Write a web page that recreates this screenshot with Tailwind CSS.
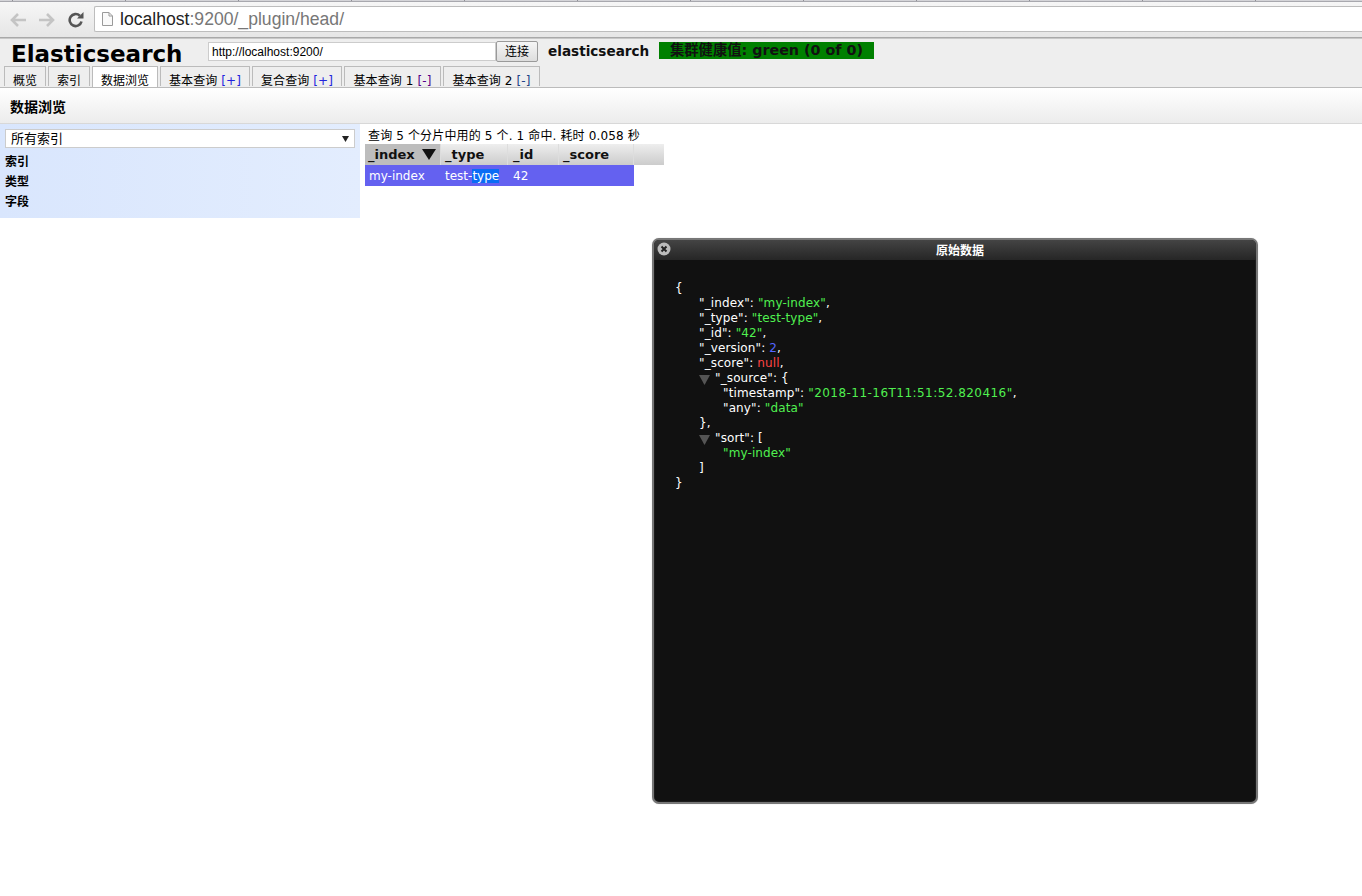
<!DOCTYPE html>
<html lang="en">
<head>
  <meta charset="UTF-8" />
  <title>Elasticsearch head</title>
  <script src="https://cdn.jsdelivr.net/npm/@tailwindcss/browser@4"></script>
</head>
<body class="relative h-[896px] overflow-hidden bg-white text-black text-[12px] font-['DejaVu_Sans','Noto_Sans_CJK_SC',sans-serif]">

  <!-- browser toolbar -->
  <div class="h-[38px] flex flex-col border-b border-[#a9a9a9] bg-gradient-to-b from-[#f7f7f7] to-[#e6e6e6]">
    <div class="h-[2px] bg-[repeating-linear-gradient(90deg,#d4d4d8_0,#d4d4d8_12px,#8f8f96_12px,#8f8f96_13px,#d4d4d8_13px,#d4d4d8_113px)] border-b border-[#a8a8ae]"></div>
    <div class="flex items-center flex-1 pl-[9px]">
      <svg class="w-[18px] h-[16px] mr-[11px]" viewBox="0 0 18 16" fill="none" stroke="#c4c4c4" stroke-width="2.6"><path d="M17 8H3M9 2 3 8l6 6"/></svg>
      <svg class="w-[18px] h-[16px] mr-[12px]" viewBox="0 0 18 16" fill="none" stroke="#c4c4c4" stroke-width="2.6"><path d="M1 8h14M9 2l6 6-6 6"/></svg>
      <svg class="w-[16px] h-[16px] mr-[10px]" viewBox="0 0 16 16" fill="none"><path d="M13.5 9.5A6 6 0 1 1 11.8 3.7" stroke="#555" stroke-width="2.6"/><path d="M9 6.5h6.5V0z" fill="#555"/></svg>
      <div class="flex items-center flex-1 h-[26px] mt-[-1px] pl-[7px] bg-white border border-[#bdbdbd] border-r-0 rounded-l-[2px] text-[17.6px] font-['Liberation_Sans',sans-serif]">
        <svg class="w-[11px] h-[14px] mr-[7px]" viewBox="0 0 11 14" fill="#fafafa" stroke="#9a9a9a"><path d="M.5.5h6.5l3.5 3.5v9.5h-10zM7 .5V4h3.5"/></svg>
        <span class="text-[#222]">localhost</span><span class="text-[#777]">:9200/_plugin/head/</span>
      </div>
    </div>
  </div>

  <!-- app header -->
  <div class="h-[50px] bg-[#eeeeee] border-t border-[#c8c8c8] border-b border-b-[#bbbbbb]">
    <div class="flex h-[28px] pt-[2px]">
      <h1 class="w-[208px] pl-[11px] text-[23px] leading-[26px] font-bold">Elasticsearch</h1>
      <input class="w-[288px] h-[19px] mt-[1px] px-[3px] bg-white border border-[#cccccc] text-[12px] font-['Liberation_Sans',sans-serif] outline-none" value="http://localhost:9200/" />
      <button class="w-[42px] h-[21px] border border-[#9a9a9a] rounded-[2px] bg-gradient-to-b from-[#f6f6f6] to-[#dddddd]">连接</button>
      <span class="ml-[10px] mt-[1px] w-[111px] text-[13.6px] leading-[18px] font-bold text-[#111]">elasticsearch</span>
      <span class="w-[215px] h-[17px] mt-[1px] bg-[#008000] text-center text-[14.3px] leading-[17px] font-bold text-[#111]">集群健康值: green (0 of 0)</span>
    </div>
    <div class="flex gap-[2px] pl-[4px] h-[20px] mt-[-1px]">
      <div class="w-[42px] text-center leading-[29px] border border-b-0 border-[#bbbbbb]">概览</div>
      <div class="w-[42px] text-center leading-[29px] border border-b-0 border-[#bbbbbb]">索引</div>
      <div class="w-[66px] h-[21px] z-10 text-center leading-[29px] bg-white border border-b-0 border-[#bbbbbb]">数据浏览</div>
      <div class="w-[90px] text-center leading-[29px] tracking-[0.1px] border border-b-0 border-[#bbbbbb]">基本查询 <span class="text-[#2222dd]">[+]</span></div>
      <div class="w-[90px] text-center leading-[29px] tracking-[0.1px] border border-b-0 border-[#bbbbbb]">复合查询 <span class="text-[#2222dd]">[+]</span></div>
      <div class="w-[97px] text-center leading-[29px] tracking-[0.1px] border border-b-0 border-[#bbbbbb]">基本查询 1 <span class="text-[#550088]">[-]</span></div>
      <div class="w-[97px] text-center leading-[29px] tracking-[0.1px] border border-b-0 border-[#bbbbbb]">基本查询 2 <span class="text-[#224488]">[-]</span></div>
    </div>
  </div>

  <!-- section header -->
  <div class="h-[36px] pl-[10px] pt-[3px] flex items-center bg-gradient-to-b from-white to-[#ececec] border-b border-[#d8d8d8]">
    <h2 class="text-[14px] font-bold">数据浏览</h2>
  </div>

  <div class="flex items-start">
    <!-- filter sidebar -->
    <div class="w-[360px] h-[94px] pt-[5px] bg-gradient-to-r from-[#d9e6fd] to-[#e3edfe]">
      <div class="flex items-center justify-between w-[350px] h-[19px] ml-[5px] pl-[5px] pr-[5px] bg-white border border-[#cccccc] text-[13px] leading-[16px]">
        <span>所有索引</span>
        <svg class="w-[7px] h-[6px]" viewBox="0 0 7 6" fill="#222"><path d="M0 0h7L3.5 6z"/></svg>
      </div>
      <div class="pl-[5px] pt-[4px] text-[12px] leading-[20px] font-bold">
        <div>索引</div>
        <div>类型</div>
        <div>字段</div>
      </div>
    </div>

    <!-- results -->
    <div class="pl-[5px] pt-[4px]">
      <div class="pl-[3px] h-[16px] leading-[16px] tracking-[0.14px]">查询 5 个分片中用的 5 个. 1 命中. 耗时 0.058 秒</div>
      <div class="flex h-[21px] text-[13px] leading-[21px] font-bold text-[#111]">
        <div class="flex items-center w-[76px] pl-[3px] bg-[#bdbdbd] border-r border-[#dddddd]">_index<svg class="w-[14px] h-[11px] ml-[7px]" viewBox="0 0 14 11" fill="#111"><path d="M0 0h14L7 11z"/></svg></div>
        <div class="w-[67px] pl-[4px] bg-gradient-to-b from-[#eeeeee] to-[#cccccc] border-r border-[#dddddd]">_type</div>
        <div class="w-[51px] pl-[5px] bg-gradient-to-b from-[#eeeeee] to-[#cccccc] border-r border-[#dddddd]">_id</div>
        <div class="w-[75px] pl-[4px] bg-gradient-to-b from-[#eeeeee] to-[#cccccc] border-r border-[#dddddd]">_score</div>
        <div class="w-[30px] bg-gradient-to-b from-[#eeeeee] to-[#cccccc]"></div>
      </div>
      <div class="flex w-[269px] h-[21px] leading-[22px] bg-[#6461f0] text-white">
        <div class="w-[76px] pl-[4px]">my-index</div>
        <div class="w-[67px] pl-[4px]">test-<span class="bg-[#0a6cf5]">type</span></div>
        <div class="w-[51px] pl-[5px]">42</div>
      </div>
    </div>
  </div>

  <!-- raw data dialog -->
  <div class="absolute left-[652px] top-[238px] w-[606px] h-[566px] flex flex-col rounded-[7px] border-2 border-[#777777] bg-[#111111] shadow-[inset_0_0_0_1px_#1c1c1c,0_0_1px_#bbbbbb] overflow-hidden">
    <div class="relative h-[20px] pl-[10px] pt-[1px] flex items-center justify-center bg-gradient-to-b from-[#444444] to-[#262626] text-white font-bold">
      <svg class="absolute left-[3px] top-[2px] w-[14px] h-[14px]" viewBox="0 0 14 14"><circle cx="7" cy="7" r="6.5" fill="#bbbbbb"/><path d="M4.5 4.5l5 5m0-5-5 5" stroke="#222" stroke-width="2"/></svg>
      <span>原始数据</span>
    </div>
    <div class="pl-[21px] pt-[21px] text-[12px] leading-[15px] tracking-[0.12px] text-white">
      <div>{</div>
      <div class="pl-[24px]">
        <div>"_index": <span class="text-[#50f050]">"my-index"</span>,</div>
        <div>"_type": <span class="text-[#50f050]">"test-type"</span>,</div>
        <div>"_id": <span class="text-[#50f050]">"42"</span>,</div>
        <div>"_version": <span class="text-[#5566ff]">2</span>,</div>
        <div>"_score": <span class="text-[#ff4444]">null</span>,</div>
        <div class="relative pl-[16px]">
          <svg class="absolute left-0 top-[4px] w-[11px] h-[10px]" viewBox="0 0 11 10" fill="#555555"><path d="M0 0h11L5.5 10z"/></svg>
          "_source": {
        </div>
        <div class="pl-[24px]">
          <div>"timestamp": <span class="text-[#50f050] tracking-[0.46px]">"2018-11-16T11:51:52.820416"</span>,</div>
          <div>"any": <span class="text-[#50f050]">"data"</span></div>
        </div>
        <div>},</div>
        <div class="relative pl-[16px]">
          <svg class="absolute left-0 top-[4px] w-[11px] h-[10px]" viewBox="0 0 11 10" fill="#555555"><path d="M0 0h11L5.5 10z"/></svg>
          "sort": [
        </div>
        <div class="pl-[24px] text-[#50f050]">"my-index"</div>
        <div>]</div>
      </div>
      <div>}</div>
    </div>
  </div>
</body>
</html>
